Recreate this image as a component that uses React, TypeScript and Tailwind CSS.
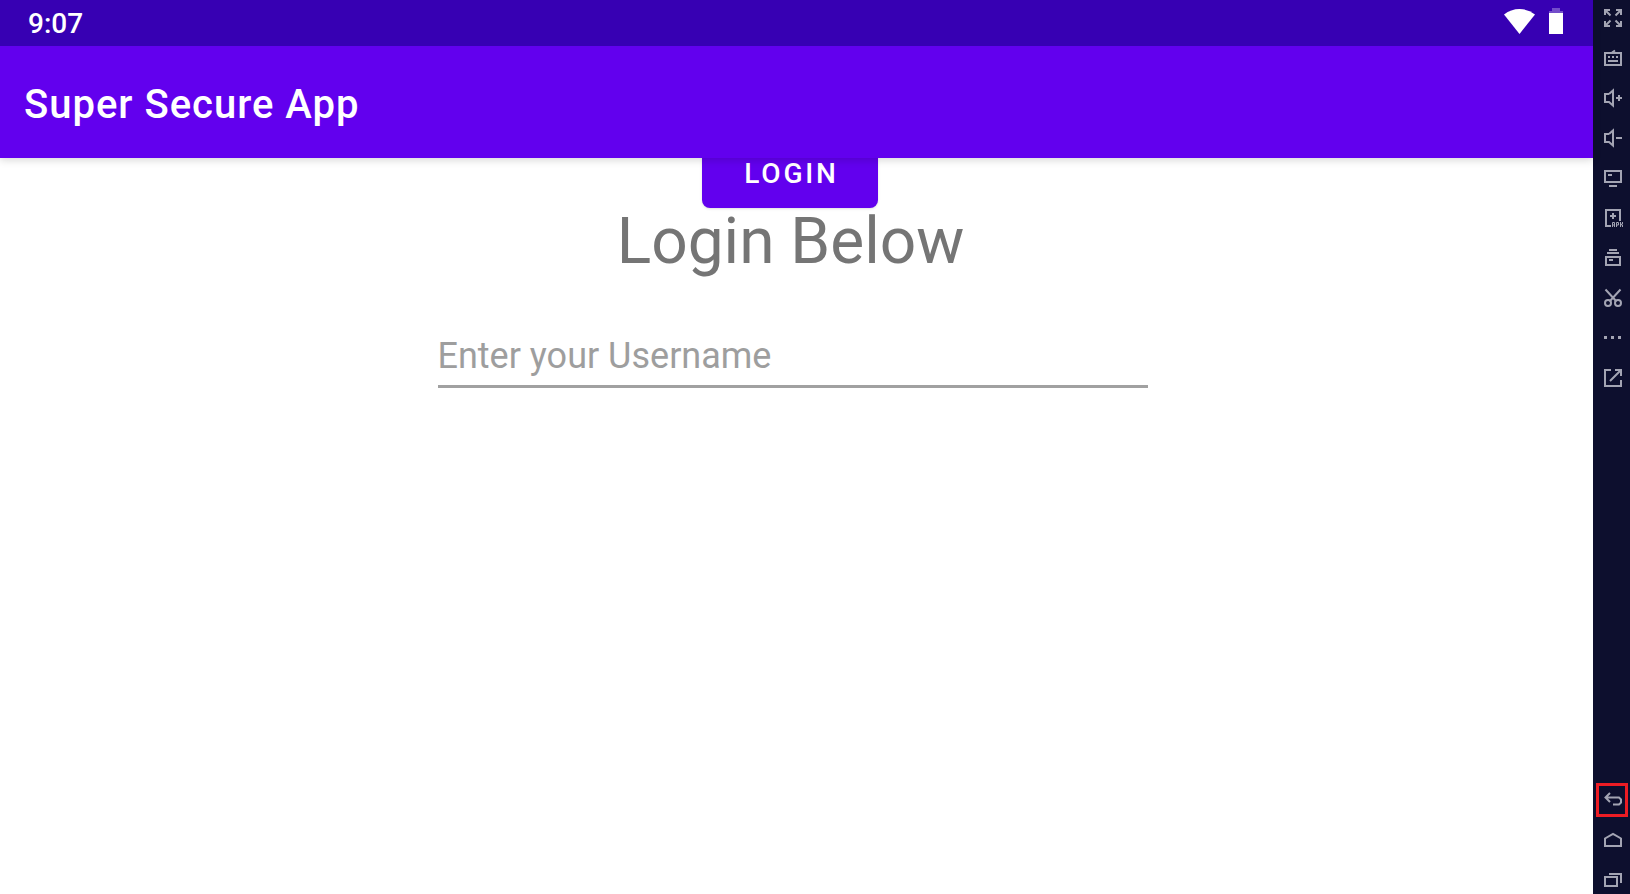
import type { ReactNode } from "react";

type Tool = { label: string; icon: ReactNode; highlighted?: boolean };

const tools: Tool[] = [
  {
    label: "Full screen",
    icon: (
      <>
        <path d="M1 6V1h5M12 1h5v5M17 12v5h-5M6 17H1v-5" />
        <path d="M1.5 1.5l5 5M16.500 1.500l-5 5M16.500 16.500l-5-5M1.500 16.500l5-5" />
      </>
    ),
  },
  {
    label: "Keyboard",
    icon: (
      <>
        <path d="M1 4h16v12H1zM8 3.500l3-2" />
        <path d="M4 8h2M8 8h2M12 8h2M4 12h10" />
      </>
    ),
  },
  {
    label: "Volume up",
    icon: <path d="M5 5H1v8h4l4 3.500V1.500L5 5M12 9h6M15 6v6" />,
  },
  {
    label: "Volume down",
    icon: <path d="M5 5H1v8h4l4 3.500V1.500L5 5M12 9h6" />,
  },
  {
    label: "Display",
    icon: <path d="M1 2h16v11H1zM4 6h4M5 17h8" />,
  },
  {
    label: "Install APK",
    icon: (
      <>
        <path d="M7 17H2V1h14v11M9 4v6M6 7h6" />
        <path
          strokeWidth="1"
          d="M8.500 18v-4.500h2V18M8.500 16h2M12.500 18v-4.500h2v2.500h-2M16.500 13v5M18.500 13v2l-2 .5 2 .5V18"
        />
      </>
    ),
  },
  {
    label: "Multi instance",
    icon: <path d="M2 8h14v8H2zM3 4h12M5 1h8M5 11h4" />,
  },
  {
    label: "Screenshot",
    icon: (
      <>
        <path d="M1.500 0.500l11 12M16.500 0.500l-11 12" />
        <circle cx="4" cy="14" r="3" />
        <circle cx="14" cy="14" r="3" />
      </>
    ),
  },
  {
    label: "More",
    icon: <path strokeWidth="3" d="M0 8.500h3M7 8.500h3M14 8.500h3" />,
  },
  {
    label: "Open in new window",
    icon: <path d="M7 1H1v16h16v-6M11 1h6v6M17 1L6 12" />,
  },
];

const navigation: Tool[] = [
  {
    label: "Back",
    highlighted: true,
    icon: <path d="M6 2L1.500 6.500L6 11M1.500 6.500H15l2 2v3l-2 2H9" />,
  },
  {
    label: "Home",
    icon: <path d="M1 15V7.500L9 3l8 4.500V15z" />,
  },
  {
    label: "Recent apps",
    icon: <path d="M1 6h12v9H1zM5 3h12v9" />,
  },
];

function ToolButton({ label, icon, highlighted }: Tool) {
  return (
    <button
      type="button"
      aria-label={label}
      className="relative flex h-7 w-full items-center justify-center pl-[3px]"
    >
      <svg
        viewBox="0 0 18 18"
        fill="none"
        stroke="currentColor"
        strokeWidth="2"
        className="size-[18px] shrink-0 overflow-visible"
        aria-hidden="true"
      >
        {icon}
      </svg>
      {highlighted && (
        <span className="absolute -inset-y-[3px] right-[2px] left-[3px] border-3 border-[#ed1c24]" />
      )}
    </button>
  );
}

export default function App() {
  return (
    <div className="flex min-h-screen bg-white font-[Roboto,sans-serif]">
      <div className="flex min-w-0 flex-1 flex-col">
        <header className="relative z-10 text-white shadow-[0_2px_8px_rgba(0,0,0,0.16)]">
          <div className="flex h-[46px] items-center justify-between bg-[#3700b3] pr-[30px] pl-7">
            <span className="pt-0.5 text-[28px] font-medium">9:07</span>
            <div className="flex items-center gap-3.5 pb-1">
              <svg viewBox="0 0 31 25" className="h-[25px] w-[31px]" aria-label="Wi-Fi">
                <path d="M0 5.500Q7 0 15.500 0T31 5.500L15.500 25z" fill="white" />
              </svg>
              <svg viewBox="0 0 14 26" className="h-[26px] w-3.5" aria-label="Battery">
                <path d="M0 5V3h3V0h8v3h3v2z" fill="white" fillOpacity="0.3" />
                <path d="M0 5h14v21H0z" fill="white" />
              </svg>
            </div>
          </div>
          <div className="flex h-28 items-center bg-[#6200ee] px-6 pt-1.5">
            <h1 className="text-[40px] font-medium tracking-wide">Super Secure App</h1>
          </div>
        </header>
        <main className="flex flex-1 flex-col items-center pr-2">
          <button
            type="button"
            className="-mt-[22px] mr-1.5 h-[72px] w-44 rounded-lg bg-[#6200ee] pt-1 pl-1 text-[28px] font-medium tracking-widest text-white shadow-sm"
          >
            LOGIN
          </button>
          <h2 className="mr-1 text-[64px] leading-[68px] text-[#757575]">Login Below</h2>
          <input
            type="text"
            aria-label="Enter your Username"
            placeholder="Enter your Username"
            className="mt-[50px] h-[62px] w-full max-w-[710px] border-b-3 border-[#a1a1a1] text-[36px] text-[#212121] outline-none placeholder:text-[#9e9e9e]"
          />
        </main>
      </div>
      <aside className="flex w-[37px] shrink-0 flex-col justify-between bg-[#0d0f2e] pt-1 text-[#a3a4b3]">
        <div className="flex flex-col gap-3">
          {tools.map((tool) => (
            <ToolButton key={tool.label} {...tool} />
          ))}
        </div>
        <nav className="flex flex-col gap-3" aria-label="Device navigation">
          {navigation.map((tool) => (
            <ToolButton key={tool.label} {...tool} />
          ))}
        </nav>
      </aside>
    </div>
  );
}
